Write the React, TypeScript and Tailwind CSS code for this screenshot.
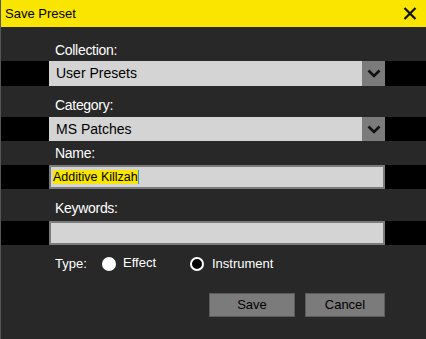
import React from "react";

const font = { fontFamily: '"Liberation Sans", Arial, sans-serif' };

const Chevron = () => (
  <svg width="14" height="9" viewBox="0 0 14 9">
    <path d="M1.5 1.5 L7 7 L12.5 1.5" fill="none" stroke="#111" strokeWidth="2.6" />
  </svg>
);

const Dropdown = ({ value }: { value: string }) => (
  <div className="flex h-full w-[336px] ml-[48px]">
    <div className="flex-1 bg-[#d4d4d4] flex items-center pl-[7px] text-[14px] text-black">
      {value}
    </div>
    <div className="w-[23px] bg-[#7b7b7b] flex items-center justify-center">
      <Chevron />
    </div>
  </div>
);

const Label = ({ text, className }: { text: string; className: string }) => (
  <div
    className={`ml-[54px] h-[16px] leading-[16px] text-[14px] tracking-[-0.3px] text-white ${className}`}
  >
    {text}
  </div>
);

const Radio = ({ checked }: { checked: boolean }) =>
  checked ? (
    <span className="w-[14px] h-[14px] rounded-full bg-white" />
  ) : (
    <span className="w-[14px] h-[14px] rounded-full bg-black border-2 border-white" />
  );

export default function App() {
  return (
    <div
      className="w-[426px] h-[339px] bg-[#282828] border-l border-[#555] flex flex-col overflow-hidden"
      style={font}
    >
      <div className="h-[27px] bg-[#f9e500] flex items-center justify-between pl-[4px] pr-[9px] shrink-0">
        <span className="text-[13px] text-black">Save Preset</span>
        <svg width="14" height="13" viewBox="0 0 14 13">
          <path d="M1.5 1 L12.5 12 M12.5 1 L1.5 12" stroke="#111" strokeWidth="2.2" />
        </svg>
      </div>

      <Label text="Collection:" className="mt-[15px]" />
      <div className="mt-[3px] h-[25px] bg-black shrink-0">
        <Dropdown value="User Presets" />
      </div>

      <Label text="Category:" className="mt-[11px]" />
      <div className="mt-[4px] h-[24px] bg-black shrink-0">
        <Dropdown value="MS Patches" />
      </div>

      <Label text="Name:" className="mt-[4px]" />
      <div className="mt-[4px] h-[24px] bg-black shrink-0">
        <div className="ml-[48px] w-[336px] h-full bg-[#d4d4d4] border-2 border-[#7b7b7b] flex items-center pl-[2px] text-[12.5px] text-black">
          <span className="bg-[#f9e500] leading-[14px]">Additive Killzah</span>
          <span className="w-[1px] h-[14px] bg-[#3d8fd6]" />
        </div>
      </div>

      <Label text="Keywords:" className="mt-[11px]" />
      <div className="mt-[5px] h-[24px] bg-black shrink-0">
        <div className="ml-[48px] w-[336px] h-full bg-[#d4d4d4] border-2 border-[#7b7b7b]" />
      </div>

      <div className="mt-[11px] ml-[54px] h-[16px] flex items-center text-[13px] text-white">
        <span className="w-[47px]">Type:</span>
        <Radio checked />
        <span className="ml-[7px] w-[67px] -mt-[2px]">Effect</span>
        <Radio checked={false} />
        <span className="ml-[8px]">Instrument</span>
      </div>

      <div className="mt-[21px] flex gap-[10px] ml-[208px]">
        <button className="w-[86px] h-[24px] bg-[#7b7b7b] border border-[#5c5c5c] text-[13px] text-black">
          Save
        </button>
        <button className="w-[80px] h-[24px] bg-[#7b7b7b] border border-[#5c5c5c] text-[13px] text-black">
          Cancel
        </button>
      </div>
    </div>
  );
}
